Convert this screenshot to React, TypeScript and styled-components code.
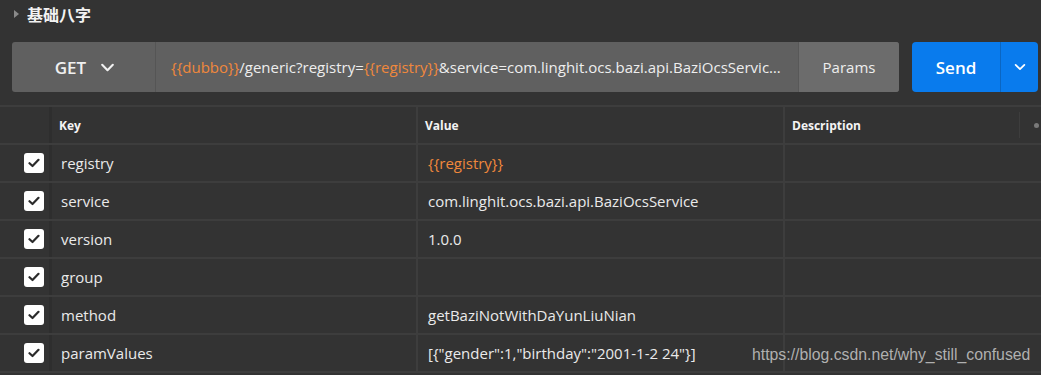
import React from 'react';
import styled, { createGlobalStyle } from 'styled-components';

const GlobalStyle = createGlobalStyle`
    html, body {
        margin: 0;
        padding: 0;
        background: #333333;
        font-family: "Open Sans", "Noto Sans CJK SC", sans-serif;
    }
`;

const params = [
    { key: 'registry', value: '{{registry}}', variable: true },
    { key: 'service', value: 'com.linghit.ocs.bazi.api.BaziOcsService' },
    { key: 'version', value: '1.0.0' },
    { key: 'group', value: '' },
    { key: 'method', value: 'getBaziNotWithDaYunLiuNian' },
    { key: 'paramValues', value: '[{"gender":1,"birthday":"2001-1-2 24"}]' },
];

const App = () => {
    return (
        <Page>
            <GlobalStyle />
            <TitleBar>
                <Caret />
                <Title>基础八字</Title>
            </TitleBar>
            <RequestBar>
                <UrlGroup>
                    <Method>
                        GET
                        <Chevron size={17} />
                    </Method>
                    <Url>
                        <Var>{'{{dubbo}}'}</Var>/generic?registry=<Var>{'{{registry}}'}</Var>&service=com.linghit.ocs.bazi.api.BaziOcsService&version=1.0.0
                    </Url>
                    <ParamsButton>Params</ParamsButton>
                </UrlGroup>
                <SendButton>
                    <SendLabel>Send</SendLabel>
                    <SendMenu>
                        <Chevron size={14} />
                    </SendMenu>
                </SendButton>
            </RequestBar>
            <Table>
                <HeadRow>
                    <CheckCell />
                    <HeadCell>Key</HeadCell>
                    <HeadCell>Value</HeadCell>
                    <HeadCell last>
                        Description
                        <HeadTools>
                            <ToolDivider />
                            <Dot />
                        </HeadTools>
                    </HeadCell>
                </HeadRow>
                {params.map((p) => (
                    <Row key={p.key}>
                        <CheckCell>
                            <CheckBox>
                                <svg width="12" height="10" viewBox="0 0 12 10">
                                    <path d="M1.5 5.2 L4.5 8 L10.5 1.8" fill="none" stroke="#2b2b2b" strokeWidth="2.2" strokeLinecap="round" strokeLinejoin="round" />
                                </svg>
                            </CheckBox>
                        </CheckCell>
                        <KeyCell>{p.key}</KeyCell>
                        <ValueCell variable={p.variable}>{p.value}</ValueCell>
                        <DescCell />
                    </Row>
                ))}
                <Row />
            </Table>
            <Watermark>https://blog.csdn.net/why_still_confused</Watermark>
        </Page>
    );
};

const Chevron = ({ size }: { size: number }) => (
    <svg width={size} height={size} viewBox="0 0 16 16">
        <path d="M3 5.5 L8 10.5 L13 5.5" fill="none" stroke="currentColor" strokeWidth="2" strokeLinecap="round" strokeLinejoin="round" />
    </svg>
);

const Page = styled.div`
    position: relative;
    width: 1041px;
    height: 375px;
    overflow: hidden;
    background: #333333;
    color: #e8e8e8;
`;

const TitleBar = styled.div`
    display: flex;
    align-items: center;
    height: 28px;
    padding-left: 14px;
    gap: 8px;
`;

const Caret = styled.span`
    width: 0;
    height: 0;
    border-top: 4px solid transparent;
    border-bottom: 4px solid transparent;
    border-left: 5px solid #8a8a8a;
`;

const Title = styled.span`
    font-family: "Noto Sans CJK SC", sans-serif;
    font-size: 16px;
    font-weight: 700;
    color: #f2f2f2;
`;

const RequestBar = styled.div`
    display: flex;
    gap: 13px;
    padding: 14px 3px 0 12px;
    height: 50px;
    margin-bottom: 13px;
`;

const UrlGroup = styled.div`
    display: flex;
    flex: 1;
    border-radius: 3px;
    overflow: hidden;
    background: #606060;
`;

const Method = styled.div`
    display: flex;
    align-items: center;
    justify-content: center;
    gap: 13px;
    width: 144px;
    padding-left: 4px;
    box-sizing: border-box;
    border-right: 1px solid #555555;
    font-size: 17px;
    font-weight: 600;
    color: #f0f0f0;
`;

const Url = styled.div`
    flex: 1;
    min-width: 0;
    padding: 0 12px 0 15px;
    font-size: 15px;
    line-height: 50px;
    color: #eeeeee;
    white-space: pre;
    overflow: hidden;
    text-overflow: ellipsis;
`;

const Var = styled.span`
    color: #f0883c;
`;

const ParamsButton = styled.div`
    display: flex;
    align-items: center;
    justify-content: center;
    flex-shrink: 0;
    width: 100px;
    background: #6c6c6c;
    border-left: 1px solid #585858;
    font-size: 15px;
    color: #eeeeee;
`;

const SendButton = styled.div`
    display: flex;
    width: 126px;
    border-radius: 4px;
    overflow: hidden;
    background: #097bed;
    color: #ffffff;
`;

const SendLabel = styled.div`
    flex: 1;
    display: flex;
    align-items: center;
    justify-content: center;
    font-size: 17px;
    font-weight: 600;
`;

const SendMenu = styled.div`
    display: flex;
    align-items: center;
    justify-content: center;
    width: 37px;
    border-left: 1px solid #0a66c2;
`;

const Table = styled.div`
    border-top: 2px solid #3d3d3d;
`;

const RowBase = styled.div`
    display: grid;
    grid-template-columns: 52px 366px 367px 1fr;
    height: 38px;
    border-bottom: 2px solid #3d3d3d;
    box-sizing: border-box;
`;

const HeadRow = styled(RowBase)``;

const Row = styled(RowBase)``;

const CellBase = styled.div`
    display: flex;
    align-items: center;
    border-right: 2px solid #3d3d3d;
    min-width: 0;
    overflow: hidden;
    white-space: nowrap;
`;

const CheckCell = styled(CellBase)`
    justify-content: flex-end;
    padding-right: 5px;
    border-right: 3px solid #2e2e2e;
`;

const HeadCell = styled(CellBase)<{ last?: boolean }>`
    padding-left: 7px;
    font-size: 12px;
    font-weight: 700;
    color: #f4f4f4;
    ${(p) => p.last && `border-right: none; position: relative;`}
`;

const HeadTools = styled.div`
    position: absolute;
    right: 2px;
    top: 5px;
    display: flex;
    align-items: center;
    gap: 14px;
`;

const ToolDivider = styled.span`
    width: 1px;
    height: 26px;
    background: #3d3d3d;
`;

const Dot = styled.span`
    width: 5px;
    height: 5px;
    border-radius: 50%;
    background: #7a7a7a;
`;

const CheckBox = styled.div`
    display: flex;
    align-items: center;
    justify-content: center;
    width: 20px;
    height: 20px;
    border-radius: 3px;
    background: #ffffff;
`;

const KeyCell = styled(CellBase)`
    padding-left: 9px;
    font-size: 15px;
    color: #eaeaea;
`;

const ValueCell = styled(CellBase)<{ variable?: boolean }>`
    padding-left: 10px;
    font-size: 15px;
    color: ${(p) => (p.variable ? '#f0883c' : '#eaeaea')};
`;

const DescCell = styled(CellBase)`
    border-right: none;
`;

const Watermark = styled.div`
    position: absolute;
    left: 752px;
    top: 346px;
    font-family: "Liberation Sans", Arial, sans-serif;
    font-size: 15.8px;
    color: rgba(200, 200, 200, 0.85);
`;

export default App;
